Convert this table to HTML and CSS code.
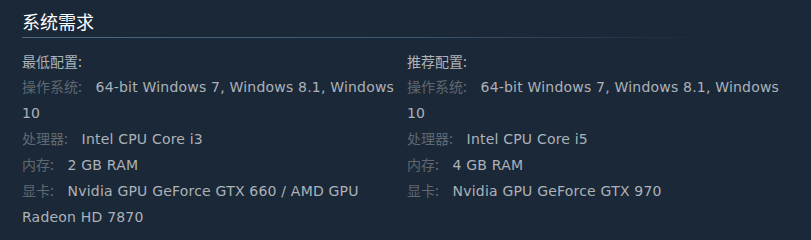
FILE: index.html
```html
<!DOCTYPE html>
<html lang="zh">
<head>
<meta charset="utf-8">
<link rel="stylesheet" href="styles.css">
</head>
<body>
<div class="sysreq">
  <h2 class="title">系统需求</h2>
  <div class="cols">
    <div class="col">
      <div class="head">最低配置:</div>
      <ul class="list">
        <li><span class="label">操作系统:</span> 64-bit Windows 7, Windows 8.1, Windows 10</li>
        <li><span class="label">处理器:</span> Intel CPU Core i3</li>
        <li><span class="label">内存:</span> 2 GB RAM</li>
        <li><span class="label">显卡:</span> Nvidia GPU GeForce GTX 660 / AMD GPU Radeon HD 7870</li>
      </ul>
    </div>
    <div class="col">
      <div class="head">推荐配置:</div>
      <ul class="list">
        <li><span class="label">操作系统:</span> 64-bit Windows 7, Windows 8.1, Windows 10</li>
        <li><span class="label">处理器:</span> Intel CPU Core i5</li>
        <li><span class="label">内存:</span> 4 GB RAM</li>
        <li><span class="label">显卡:</span> Nvidia GPU GeForce GTX 970</li>
      </ul>
    </div>
  </div>
</div>
</body>
</html>
```
FILE: styles.css
```css
html, body {
  margin: 0;
  padding: 0;
  background: #1b2838;
}
.sysreq {
  padding: 8px 22px 0 22px;
  font-family: "DejaVu Sans", "Noto Sans CJK SC", sans-serif;
}
.title {
  margin: 0;
  font-family: "Noto Sans CJK SC", sans-serif;
  font-size: 18px;
  font-weight: normal;
  color: #ffffff;
  line-height: 26px;
  padding-bottom: 3px;
  width: 683px;
  border-bottom: 1px solid transparent;
  border-image: linear-gradient(to right, #4b6b84 0%, #3a5570 60%, rgba(58, 85, 112, 0) 100%) 1;
}
.cols {
  display: flex;
  gap: 10px;
  margin-top: 11px;
}
.col {
  width: 375px;
}
.head {
  font-family: "Noto Sans CJK SC", sans-serif;
  font-size: 14px;
  line-height: 24px;
  color: #acb2b8;
}
.list {
  list-style: none;
  margin: 2px 0 0 0;
  padding: 0;
}
.list li {
  font-size: 14px;
  line-height: 25.9px;
  color: #acb2b8;
  letter-spacing: 0.2px;
}
.label {
  font-family: "Noto Sans CJK SC", sans-serif;
  line-height: 1;
  letter-spacing: 0;
  color: #5f6870;
  margin-right: 9px;
}
```
